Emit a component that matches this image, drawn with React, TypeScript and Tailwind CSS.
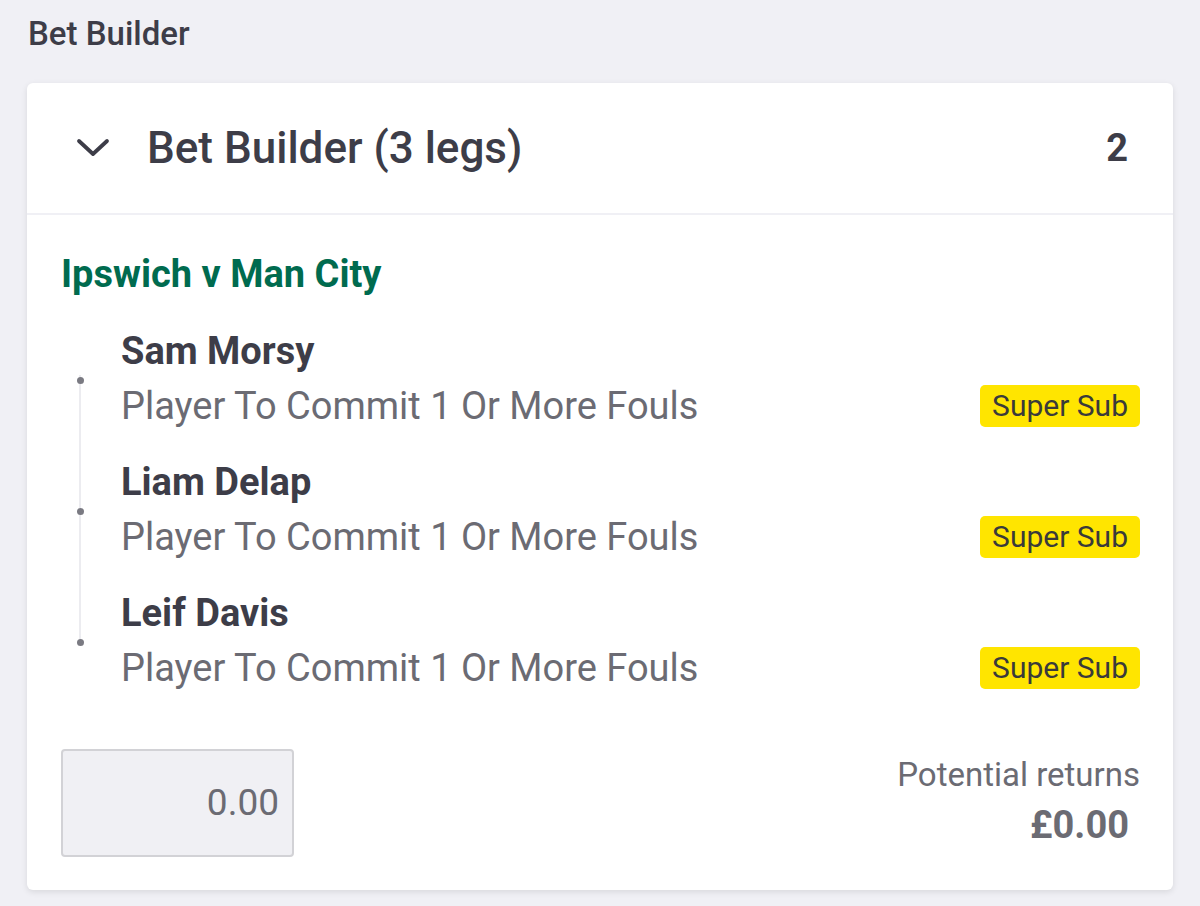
import React from "react";

const legs = [
  { name: "Sam Morsy", market: "Player To Commit 1 Or More Fouls" },
  { name: "Liam Delap", market: "Player To Commit 1 Or More Fouls" },
  { name: "Leif Davis", market: "Player To Commit 1 Or More Fouls" },
];

export default function App() {
  return (
    <div
      className="w-[1200px] h-[906px] overflow-hidden bg-[#f0f0f5] text-[#3d3d48]"
      style={{ fontFamily: "Roboto, 'Liberation Sans', sans-serif" }}
    >
      <div className="pl-[28px] pt-[14px] h-[83px]">
        <h1 className="text-[33px] leading-[40px] font-medium text-[#3d3d48]">Bet Builder</h1>
      </div>
      <div className="ml-[27px] w-[1146px] bg-white rounded-[6px] shadow-[0_2px_6px_rgba(0,0,0,0.10)]">
        <div className="h-[132px] flex items-center pl-[49px] pr-[45px] border-b-2 border-[#f0f0f5]">
          <svg width="34" height="20" viewBox="0 0 34 20" className="shrink-0">
            <path d="M3 3 L17 16 L31 3" fill="none" stroke="#3d3d48" strokeWidth="3.8" strokeLinecap="round" strokeLinejoin="round" />
          </svg>
          <div className="ml-[37px] text-[44px] leading-[50px] font-medium">Bet Builder (3 legs)</div>
          <div className="ml-auto text-[38px] leading-[50px] font-bold">2</div>
        </div>
        <div className="pt-[34px] pl-[34px] pr-[33px] pb-[33px]">
          <div className="text-[38px] leading-[50px] font-bold text-[#006b4f]">Ipswich v Man City</div>
          <div className="relative mt-[26px] flex flex-col gap-[21px]">
            <div className="absolute left-[18px] top-[50px] w-[2px] h-[268px] bg-[#ececf0]" />
            {legs.map((leg) => (
              <div key={leg.name} className="relative flex">
                <div className="absolute left-[16px] top-[52px] w-[7px] h-[7px] rounded-full bg-[#7a7a82]" />
                <div className="w-[60px] shrink-0" />
                <div className="flex-1">
                  <div className="text-[38px] leading-[52px] font-bold text-[#3d3d48]">{leg.name}</div>
                  <div className="flex items-center justify-between h-[58px]">
                    <div className="text-[38px] leading-[58px] text-[#6b6b73]">{leg.market}</div>
                    <div className="h-[42px] px-[12px] flex items-center rounded-[5px] bg-[#ffe500] text-[30px] leading-[42px] text-[#3a3a3a]">
                      Super Sub
                    </div>
                  </div>
                </div>
              </div>
            ))}
          </div>
          <div className="mt-[52px] flex items-center justify-between">
            <div className="w-[233px] h-[108px] rounded-[4px] border-2 border-[#d2d2d6] bg-[#f0f0f4] flex items-center justify-end pr-[13px] text-[37px] text-[#6b6b73]">
              0.00
            </div>
            <div className="flex flex-col items-end">
              <div className="text-[33px] leading-[44px] text-[#6b6b73]">Potential returns</div>
              <div className="pr-[11px] text-[38px] leading-[56px] font-bold text-[#6b6b73]">£0.00</div>
            </div>
          </div>
        </div>
      </div>
    </div>
  );
}
